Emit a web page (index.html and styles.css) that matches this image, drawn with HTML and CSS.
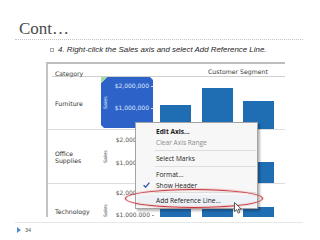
FILE: index.html
```html
<!DOCTYPE html>
<html>
<head>
<meta charset="utf-8">
<link rel="stylesheet" href="styles.css">
</head>
<body>
<div class="slide">
  <h1 class="title">Cont…</h1>
  <div class="rule"></div>
  <p class="bullet"><span class="box"></span><span class="btext">4. Right-click the Sales axis and select Add Reference Line.</span></p>
  <div class="shot">
    <div class="head">
      <div class="h-cat">Category</div>
      <div class="h-axis"></div>
      <div class="h-seg">Customer Segment</div>
    </div>
    <div class="row r1">
      <div class="label">Furniture</div>
      <div class="axis sel">
        <span class="axname">Sales</span>
        <div class="ticks"><span>$2,000,000</span><span>$1,000,000</span></div>
      </div>
      <div class="bars">
        <i class="bar" style="height:24px"></i>
        <i class="bar" style="height:41px"></i>
        <i class="bar" style="height:28px"></i>
        <i class="edge"></i>
      </div>
    </div>
    <div class="row r2">
      <div class="label">Office<br>Supplies</div>
      <div class="axis">
        <span class="axname">Sales</span>
        <div class="ticks"><span>$2,000,000</span><span>$1,000,000</span></div>
      </div>
      <div class="bars">
        <i class="bar" style="height:18px"></i>
        <i class="bar" style="height:30px"></i>
        <i class="bar" style="height:21px"></i>
        <i class="edge"></i>
      </div>
    </div>
    <div class="row r3">
      <div class="label">Technology</div>
      <div class="axis">
        <span class="axname">Sales</span>
        <div class="ticks"><span>$2,000,000</span><span>$1,000,000</span></div>
      </div>
      <div class="bars">
        <i class="bar" style="height:30px"></i>
        <i class="bar" style="height:30px"></i>
        <i class="bar" style="height:31px"></i>
        <i class="edge"></i>
      </div>
    </div>

    <div class="menu">
      <div class="item bold"><span class="gut"></span>Edit Axis...</div>
      <div class="item dim"><span class="gut"></span>Clear Axis Range</div>
      <div class="sep"></div>
      <div class="item"><span class="gut"></span>Select Marks</div>
      <div class="sep"></div>
      <div class="item"><span class="gut"></span>Format...</div>
      <div class="item"><span class="gut"><svg class="chk" width="7" height="6" viewBox="0 0 7 6"><path d="M0.6 3.2 L2.6 5.2 L6.4 0.6" fill="none" stroke="#2a55b0" stroke-width="1.3"/></svg></span>Show Header</div>
      <div class="sep small"></div>
      <div class="item hover"><span class="gut"></span>Add Reference Line...</div>
    </div>
    <div class="ring"></div>
    <svg class="cursor" width="9" height="12" viewBox="0 0 9 12"><path d="M0.5 0.5 L0.5 9.5 L2.7 7.6 L4.3 11.2 L5.8 10.5 L4.3 7.1 L7.3 7.1 Z" fill="#fff" stroke="#333" stroke-width="0.8" stroke-linejoin="round"/></svg>
  </div>
  <div class="footline"></div>
  <div class="foot"><span class="tri"></span><span class="num">34</span></div>
</div>
</body>
</html>
```

FILE: styles.css
```css
* { box-sizing: border-box; }
html, body { margin: 0; padding: 0; background: #fff; }
body { width: 320px; height: 240px; overflow: hidden; font-family: "DejaVu Sans", sans-serif; }

.slide { width: 320px; height: 240px; }

.title {
  margin: 0;
  padding: 19px 0 0 19px;
  font-family: "Liberation Serif", serif;
  font-weight: normal;
  font-size: 17px;
  line-height: 20px;
  color: #4a4a4a;
}
.rule {
  margin-left: 15px;
  width: 288px;
  height: 0;
  border-top: 1px dotted #c4c4c4;
}
.bullet {
  margin: 5px 0 0 50px;
  display: flex;
  align-items: center;
  height: 9px;
}
.box {
  width: 4px;
  height: 4px;
  border: 1px solid #a8a8a8;
  margin-right: 4px;
  flex: none;
}
.btext {
  font-family: "Liberation Sans", Arial, sans-serif;
  font-style: italic;
  font-size: 7.9px;
  line-height: 9px;
  color: #262626;
  white-space: nowrap;
}

.shot {
  position: relative;
  margin: 8px 0 0 46px;
  width: 239px;
  height: 155px;
  border-top: 2px solid #bdbdbd;
  border-left: 2px solid #c4c4c4;
  overflow: hidden;
  font-family: "DejaVu Sans", sans-serif;
  color: #3a3a3a;
}
.head {
  display: grid;
  grid-template-columns: 53px 53px 131px;
  height: 13px;
  border-bottom: 1px solid #cfcfcf;
  margin-left: 4px;
  font-size: 6.2px;
}
.head .h-cat { padding: 6px 0 0 3px; line-height: 7px; margin-left: -4px; padding-left: 7px; }
.h-seg { padding: 4px 0 0 54px; line-height: 7px; white-space: nowrap; margin-left: -4px; }

.row {
  display: grid;
  grid-template-columns: 53px 53px 131px;
  height: 53px;
  border-bottom: 1px solid #dcdcdc;
}
.r2 { height: 54px; }
.r3 { height: 54px; border-bottom: none; }

.label {
  display: flex;
  flex-direction: column;
  justify-content: center;
  padding-left: 7px;
  font-size: 6.2px;
  line-height: 7px;
  color: #333;
}
.axis {
  display: flex;
  font-size: 6px;
  color: #555;
}
.axis.sel {
  margin: 0 1px 1px 0;
  background: linear-gradient(135deg, #a6d9a4 0, #a6d9a4 4.5px, #2d63c9 4.5px);
  clip-path: polygon(0 0, calc(100% - 3px) 0, 100% 3px, 100% calc(100% - 3px), calc(100% - 3px) 100%, 3px 100%, 0 calc(100% - 3px));
  color: #dfe8fb;
}
.axname {
  writing-mode: vertical-rl;
  transform: rotate(180deg);
  font-size: 4.8px;
  width: 6px;
  margin-left: 2px;
  text-align: center;
  line-height: 6px;
}
.ticks {
  flex: 1;
  display: flex;
  flex-direction: column;
  align-items: flex-end;
  gap: 15px;
  padding-top: 5px;
  line-height: 7px;
  white-space: nowrap;
}
.r2 .ticks { padding-top: 6px; gap: 16px; }
.ticks span::after {
  content: "";
  display: inline-block;
  width: 2px;
  height: 1px;
  margin-left: 2px;
  vertical-align: middle;
  background: #9a9a9a;
}
.sel .ticks span::after { background: #cfdcf7; }

.bars {
  display: flex;
  align-items: flex-end;
  gap: 10.5px;
  padding-left: 6px;
}
.bar {
  width: 31px;
  background: #1f6db2;
  flex: none;
}
.edge {
  margin-left: auto;
  width: 1px;
  height: 20px;
  background: #c9d7e5;
}

.menu {
  position: absolute;
  left: 87px;
  top: 58px;
  width: 123px;
  padding: 2.5px 1px 2px;
  background: #f7f7f7;
  border: 1px solid #a3a3a3;
  box-shadow: 2px 2px 2px rgba(0,0,0,0.28);
  font-family: "Open Sans", sans-serif;
  font-size: 6.6px;
  color: #1c1c1c;
}
.item {
  display: flex;
  align-items: center;
  height: 11px;
  line-height: 11px;
  white-space: nowrap;
}
.gut {
  width: 19px;
  flex: none;
  display: flex;
  justify-content: center;
}
.item.bold { font-weight: 700; }
.item.dim { color: #8c8c8c; }
.item.hover { background: #eef1f5; }
.sep {
  height: 5px;
  margin-left: 18px;
  display: flex;
  align-items: center;
}
.sep::before {
  content: "";
  flex: 1;
  height: 1px;
  background: #dedede;
}
.sep.small { height: 4px; }
.chk { display: block; }

.ring {
  position: absolute;
  left: 77px;
  top: 125px;
  width: 138px;
  height: 19px;
  border: 1.5px solid #c4333a;
  border-radius: 50%;
  box-shadow: 0 0 1px 1px rgba(220,120,120,0.35), inset 0 0 1px 1px rgba(230,160,160,0.35);
}
.cursor {
  position: absolute;
  left: 186px;
  top: 138px;
}

.footline {
  margin: 5px 0 0 15px;
  width: 288px;
  height: 0;
  border-top: 1px solid #e8e8e8;
}
.foot {
  display: flex;
  align-items: center;
  gap: 4px;
  margin: 3px 0 0 17px;
  height: 7px;
}
.tri {
  width: 0;
  height: 0;
  border-top: 3px solid transparent;
  border-bottom: 3px solid transparent;
  border-left: 4px solid #4f8fcf;
}
.num {
  font-family: "Liberation Sans", Arial, sans-serif;
  font-size: 5.5px;
  color: #555;
}
```
